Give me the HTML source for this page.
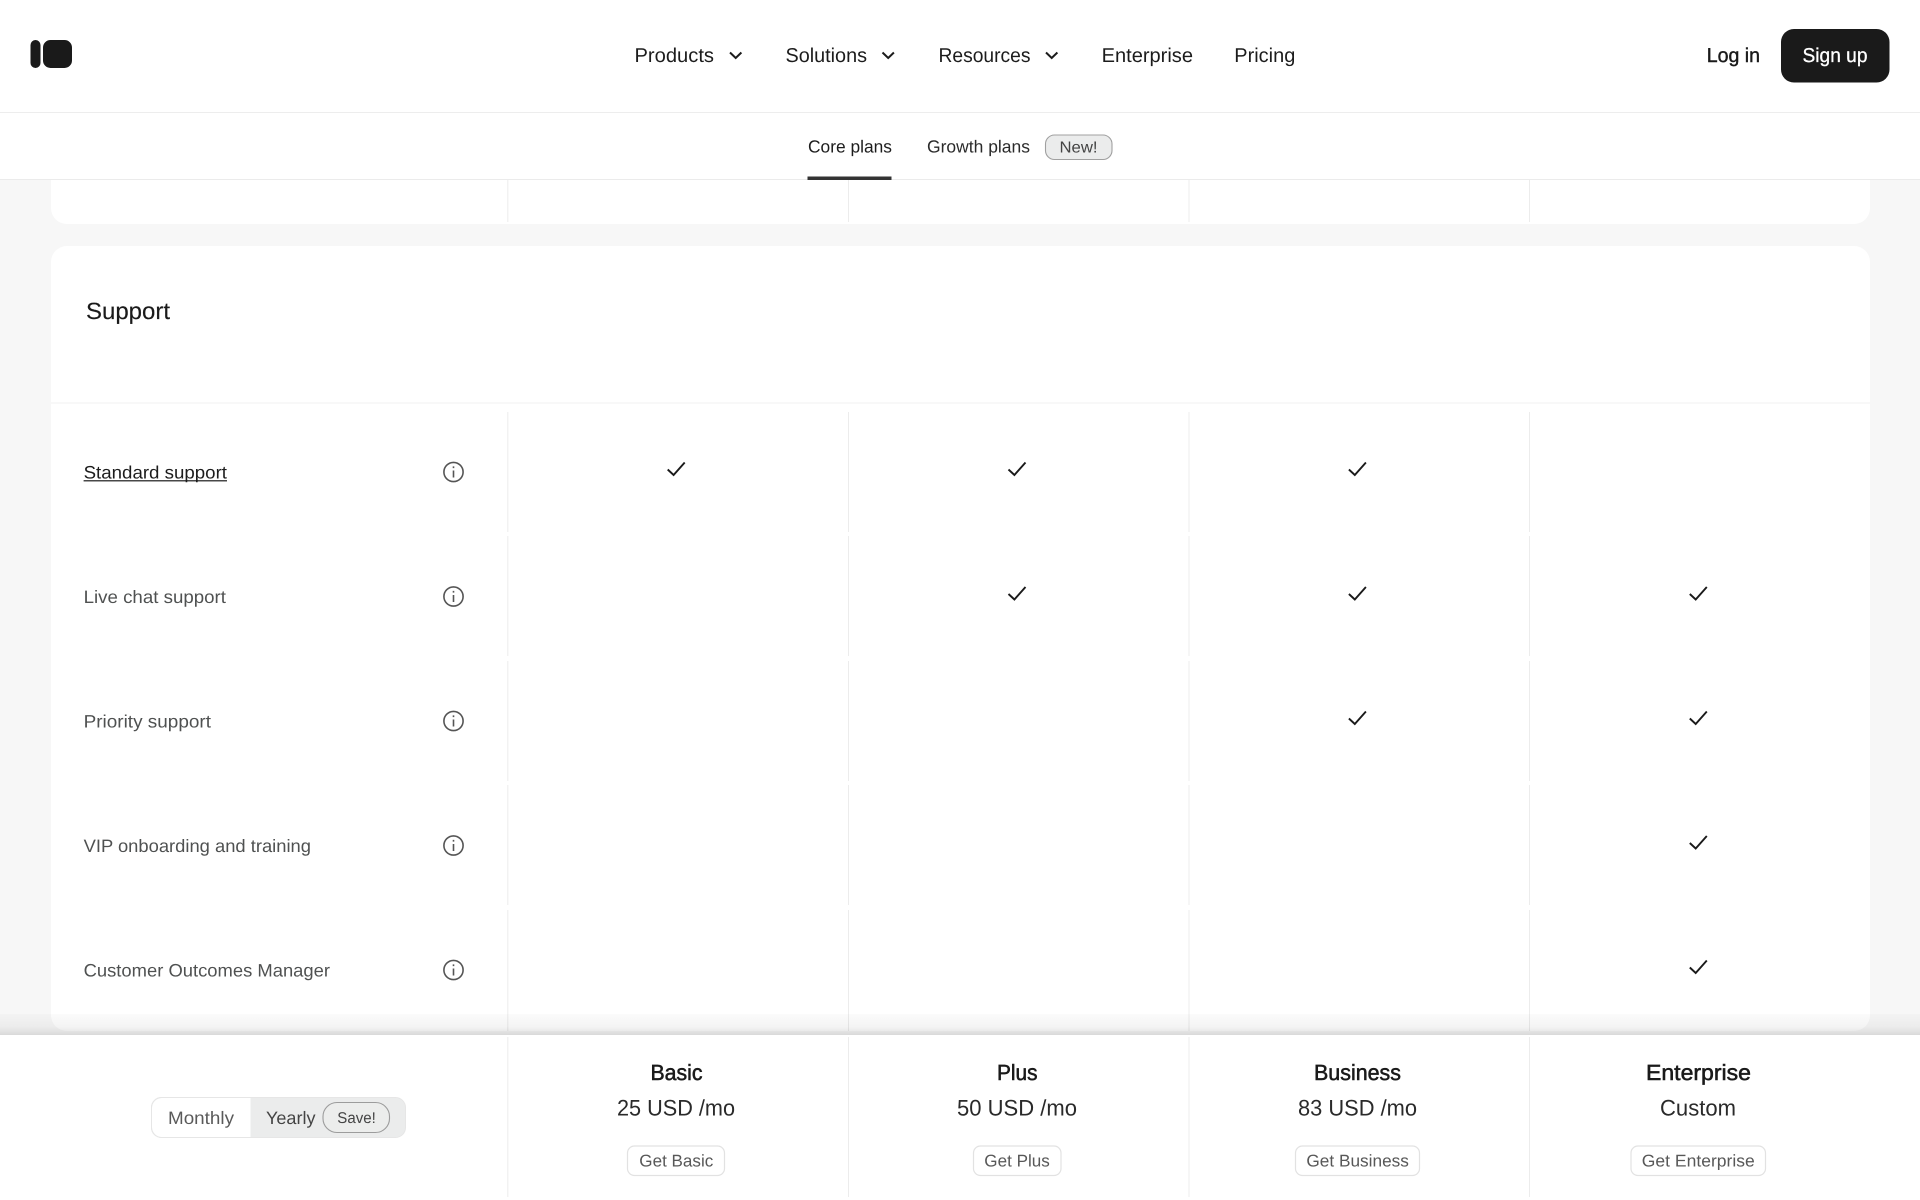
<!DOCTYPE html>
<html lang="en">
<head>
<meta charset="utf-8">
<title>Pricing</title>
<style>
html,body{margin:0;padding:0;width:1920px;height:1200px;overflow:hidden;background:#f7f7f7}
svg{display:block}
text{font-family:"Liberation Sans",Arial,sans-serif;text-rendering:geometricPrecision}
.nav{font-size:20px;fill:#1c1c1c}
.tab{font-size:17.5px;fill:#1c1c1c}
.row{font-size:18px;fill:#4f5151}
.name{font-size:22px;fill:#1a1a1a;stroke:#1a1a1a;stroke-width:.55}
.price{font-size:22.5px;fill:#2a2a2a}
.btn{font-size:17px;fill:#585858}
.ln{fill:#ececec}
.chk{fill:none;stroke:#1a1a1a;stroke-width:1.9}
.chev{fill:none;stroke:#1c1c1c;stroke-width:2}
.inf{fill:none;stroke:#555;stroke-width:1.6}
</style>
</head>
<body>
<svg xmlns="http://www.w3.org/2000/svg" width="1920" height="1200" viewBox="0 0 1920 1200">
<defs>
<linearGradient id="sh" x1="0" y1="0" x2="0" y2="1">
<stop offset="0" stop-color="#000" stop-opacity=".015"/>
<stop offset=".6" stop-color="#000" stop-opacity=".045"/>
<stop offset="1" stop-color="#000" stop-opacity=".12"/>
</linearGradient>
</defs>

<!-- page bg -->
<rect width="1920" height="1200" fill="#f7f7f7"/>

<!-- top card -->
<rect x="51" y="140" width="1819" height="84" rx="16" fill="#fff"/>
<rect class="ln" x="507.300" y="180" width="1" height="42"/>
<rect class="ln" x="848" y="180" width="1" height="42"/>
<rect class="ln" x="1188.500" y="180" width="1" height="42"/>
<rect class="ln" x="1529" y="180" width="1" height="42"/>

<!-- support card -->
<rect x="51" y="246" width="1819" height="785" rx="16" fill="#fff"/>
<text x="86" y="319" font-size="23.500" fill="#1a1a1a" stroke="#1a1a1a" stroke-width=".15" textLength="84" lengthAdjust="spacingAndGlyphs">Support</text>
<rect x="51" y="402.500" width="1819" height="1" fill="#f1f1f1"/>

<!-- vertical separators -->
<g class="ln">
<rect x="507.300" y="412" width="1" height="120"/><rect x="848" y="412" width="1" height="120"/><rect x="1188.500" y="412" width="1" height="120"/><rect x="1529" y="412" width="1" height="120"/>
<rect x="507.300" y="536" width="1" height="120"/><rect x="848" y="536" width="1" height="120"/><rect x="1188.500" y="536" width="1" height="120"/><rect x="1529" y="536" width="1" height="120"/>
<rect x="507.300" y="661" width="1" height="120"/><rect x="848" y="661" width="1" height="120"/><rect x="1188.500" y="661" width="1" height="120"/><rect x="1529" y="661" width="1" height="120"/>
<rect x="507.300" y="785" width="1" height="120"/><rect x="848" y="785" width="1" height="120"/><rect x="1188.500" y="785" width="1" height="120"/><rect x="1529" y="785" width="1" height="120"/>
<rect x="507.300" y="910" width="1" height="121"/><rect x="848" y="910" width="1" height="121"/><rect x="1188.500" y="910" width="1" height="121"/><rect x="1529" y="910" width="1" height="121"/>
</g>

<!-- row labels -->
<text x="83.600" y="478.500" class="row" style="fill:#1c1c1c" textLength="143.400" lengthAdjust="spacingAndGlyphs">Standard support</text>
<rect x="83.600" y="480.200" width="143.400" height="1.200" fill="#1c1c1c"/>
<text x="83.600" y="603" class="row" textLength="142.400" lengthAdjust="spacingAndGlyphs">Live chat support</text>
<text x="83.600" y="727.500" class="row" textLength="127.400" lengthAdjust="spacingAndGlyphs">Priority support</text>
<text x="83.600" y="852" class="row" textLength="227.400" lengthAdjust="spacingAndGlyphs">VIP onboarding and training</text>
<text x="83.600" y="976.500" class="row" textLength="246.400" lengthAdjust="spacingAndGlyphs">Customer Outcomes Manager</text>

<!-- info icons -->
<g class="inf">
<g transform="translate(453.500,472)"><circle r="9.600"/><path d="M0-1.500V5.500M0-5.600V-3.900"/></g>
<g transform="translate(453.500,596.500)"><circle r="9.600"/><path d="M0-1.500V5.500M0-5.600V-3.900"/></g>
<g transform="translate(453.500,721)"><circle r="9.600"/><path d="M0-1.500V5.500M0-5.600V-3.900"/></g>
<g transform="translate(453.500,845.500)"><circle r="9.600"/><path d="M0-1.500V5.500M0-5.600V-3.900"/></g>
<g transform="translate(453.500,970)"><circle r="9.600"/><path d="M0-1.500V5.500M0-5.600V-3.900"/></g>
</g>

<!-- checks -->
<g class="chk">
<path transform="translate(676.200,469)" d="M-8.500 .5L-2.600 6L8.500-6.500"/>
<path transform="translate(1017,469)" d="M-8.500 .5L-2.600 6L8.500-6.500"/>
<path transform="translate(1357.400,469)" d="M-8.500 .5L-2.600 6L8.500-6.500"/>
<path transform="translate(1017,593.500)" d="M-8.500 .5L-2.600 6L8.500-6.500"/>
<path transform="translate(1357.400,593.500)" d="M-8.500 .5L-2.600 6L8.500-6.500"/>
<path transform="translate(1698.300,593.500)" d="M-8.500 .5L-2.600 6L8.500-6.500"/>
<path transform="translate(1357.400,718)" d="M-8.500 .5L-2.600 6L8.500-6.500"/>
<path transform="translate(1698.300,718)" d="M-8.500 .5L-2.600 6L8.500-6.500"/>
<path transform="translate(1698.300,842.500)" d="M-8.500 .5L-2.600 6L8.500-6.500"/>
<path transform="translate(1698.300,967)" d="M-8.500 .5L-2.600 6L8.500-6.500"/>
</g>

<!-- footer shadow -->
<rect x="0" y="1014" width="1920" height="21" fill="url(#sh)"/>
<!-- footer -->
<rect x="0" y="1035" width="1920" height="165" fill="#fff"/>
<g class="ln">
<rect x="507.300" y="1037" width="1" height="160"/><rect x="848" y="1037" width="1" height="160"/><rect x="1188.500" y="1037" width="1" height="160"/><rect x="1529" y="1037" width="1" height="160"/>
</g>

<!-- toggle -->
<rect x="151.500" y="1097.500" width="254" height="40" rx="10" fill="#ebecec" stroke="#e6e6e6"/>
<path d="M250.500 1098H162a10 10 0 0 0-10 10v19a10 10 0 0 0 10 10h88.500z" fill="#fff"/>
<path d="M250.500 1097.500H161.500a10 10 0 0 0-10 10v20a10 10 0 0 0 10 10h89" fill="none" stroke="#e6e6e6"/>
<text x="168" y="1124" font-size="18" fill="#5a5a5a" textLength="66" lengthAdjust="spacingAndGlyphs">Monthly</text>
<text x="266" y="1124" font-size="18" fill="#444" textLength="49.500" lengthAdjust="spacingAndGlyphs">Yearly</text>
<rect x="323" y="1102.500" width="66.500" height="30" rx="14" fill="#ecedec" stroke="#9c9c9c" stroke-width="1.100"/>
<text x="337.300" y="1123" font-size="15.500" fill="#444" textLength="38.500" lengthAdjust="spacingAndGlyphs">Save!</text>

<!-- plan names -->
<text x="650.500" y="1080" class="name" textLength="52" lengthAdjust="spacingAndGlyphs">Basic</text>
<text x="997" y="1080" class="name" textLength="40.500" lengthAdjust="spacingAndGlyphs">Plus</text>
<text x="1314" y="1080" class="name" textLength="87" lengthAdjust="spacingAndGlyphs">Business</text>
<text x="1646" y="1080" class="name" textLength="105" lengthAdjust="spacingAndGlyphs">Enterprise</text>

<text x="617" y="1115.500" class="price" textLength="118" lengthAdjust="spacingAndGlyphs">25 USD /mo</text>
<text x="957" y="1115.500" class="price" textLength="120" lengthAdjust="spacingAndGlyphs">50 USD /mo</text>
<text x="1298" y="1115.500" class="price" textLength="119" lengthAdjust="spacingAndGlyphs">83 USD /mo</text>
<text x="1660" y="1115.500" class="price" textLength="76" lengthAdjust="spacingAndGlyphs">Custom</text>

<!-- plan buttons -->
<g fill="#fff" stroke="#e2e2e2" stroke-width="1.200">
<rect x="627.500" y="1146" width="97" height="29.500" rx="7"/>
<rect x="973.500" y="1146" width="87.500" height="29.500" rx="7"/>
<rect x="1295.500" y="1146" width="124" height="29.500" rx="7"/>
<rect x="1631" y="1146" width="134.500" height="29.500" rx="7"/>
</g>
<text x="639.300" y="1166.500" class="btn" textLength="74" lengthAdjust="spacingAndGlyphs">Get Basic</text>
<text x="984.300" y="1166.500" class="btn" textLength="65.500" lengthAdjust="spacingAndGlyphs">Get Plus</text>
<text x="1306.400" y="1166.500" class="btn" textLength="102.500" lengthAdjust="spacingAndGlyphs">Get Business</text>
<text x="1641.800" y="1166.500" class="btn" textLength="113" lengthAdjust="spacingAndGlyphs">Get Enterprise</text>

<!-- header -->
<rect x="0" y="0" width="1920" height="180" fill="#fff"/>
<rect x="0" y="112" width="1920" height="1" fill="#ededed"/>
<rect x="0" y="179" width="1920" height="1" fill="#ebebeb"/>

<!-- logo -->
<rect x="30.500" y="40" width="10" height="28" rx="5" fill="#1a1a1a"/>
<rect x="43" y="40" width="29" height="28" rx="7.500" fill="#1a1a1a"/>

<!-- nav -->
<text x="634.500" y="62" class="nav" textLength="79.500" lengthAdjust="spacingAndGlyphs">Products</text>
<path class="chev" d="M730 52.500L735.700 58L741.400 52.500"/>
<text x="785.500" y="62" class="nav" textLength="81.500" lengthAdjust="spacingAndGlyphs">Solutions</text>
<path class="chev" d="M882.500 52.500L888.200 58L893.900 52.500"/>
<text x="938.500" y="62" class="nav" textLength="92" lengthAdjust="spacingAndGlyphs">Resources</text>
<path class="chev" d="M1046 52.500L1051.700 58L1057.400 52.500"/>
<text x="1101.600" y="62" class="nav" textLength="91.400" lengthAdjust="spacingAndGlyphs">Enterprise</text>
<text x="1234.300" y="62" class="nav" textLength="61" lengthAdjust="spacingAndGlyphs">Pricing</text>

<text x="1706.700" y="62" font-size="20" fill="#1a1a1a" stroke="#1a1a1a" stroke-width=".4" textLength="53.300" lengthAdjust="spacingAndGlyphs">Log in</text>
<rect x="1781" y="29" width="108.500" height="53.500" rx="13" fill="#1a1a1a"/>
<text x="1802.500" y="62" font-size="20" fill="#fff" stroke="#fff" stroke-width=".3" textLength="65" lengthAdjust="spacingAndGlyphs">Sign up</text>

<!-- tabs -->
<text x="808" y="152.500" class="tab" textLength="84" lengthAdjust="spacingAndGlyphs">Core plans</text>
<rect x="807.500" y="176.500" width="84" height="3.500" fill="#333"/>
<text x="927" y="152.500" class="tab" style="fill:#2a2a2a" textLength="103" lengthAdjust="spacingAndGlyphs">Growth plans</text>
<rect x="1045.500" y="135" width="66.500" height="24.500" rx="9" fill="#ebecec" stroke="#a0a0a0" stroke-width="1.100"/>
<text x="1059.500" y="152.500" font-size="16" fill="#444" textLength="38" lengthAdjust="spacingAndGlyphs">New!</text>
</svg>
</body>
</html>
